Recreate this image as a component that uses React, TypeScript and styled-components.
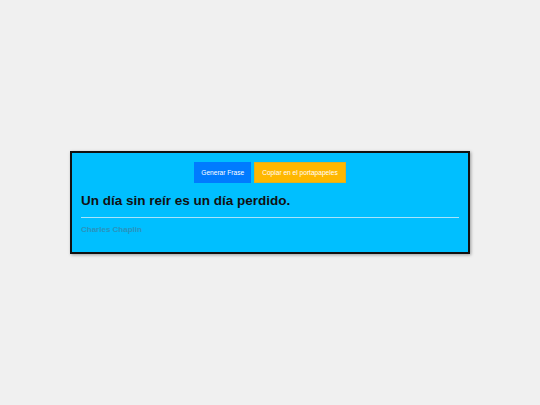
import styled, { createGlobalStyle } from "styled-components";

const GlobalStyle = createGlobalStyle`
    * { box-sizing: border-box; }
    body {
        margin: 0;
        background: #f0f0f0;
        font-family: "Liberation Sans", Arial, sans-serif;
    }
`;

const Page = styled.div`
    min-height: 100vh;
    display: flex;
    align-items: center;
    justify-content: center;
`;

const Card = styled.div`
    width: 400px;
    background: #00bfff;
    border: 2px solid #111;
    box-shadow: 1px 1px 3px rgba(0, 0, 0, 0.35);
    padding: 9px 9px 17px;
`;

const Buttons = styled.div`
    display: flex;
    justify-content: center;
    gap: 3px;
`;

interface IButton {
    variant: "primary" | "warning";
}

const Button = styled.button<IButton>`
    font-family: inherit;
    font-size: 6.6px;
    height: 21px;
    padding: 0 ${props => (props.variant === "primary" ? "6px" : "7px")};
    color: #fff;
    border: 1px solid ${props => (props.variant === "primary" ? "#007bff" : "#e0b020")};
    background: ${props => (props.variant === "primary" ? "#007bff" : "#ffb700")};
    cursor: pointer;
`;

const Quote = styled.h1`
    margin: 10px 0 0;
    font-size: 13.5px;
    font-weight: bold;
    color: #111;
    line-height: 16px;
`;

const Divider = styled.hr`
    margin: 8px 0 0;
    border: 0;
    border-top: 1px solid #a8e4fb;
`;

const Author = styled.p`
    margin: 7px 0 0;
    font-size: 8px;
    line-height: 10px;
    font-weight: bold;
    color: #2a93bd;
`;

export default function App() {
    return (
        <>
            <GlobalStyle />
            <Page>
                <Card>
                    <Buttons>
                        <Button variant="primary">Generar Frase</Button>
                        <Button variant="warning">Copiar en el portapapeles</Button>
                    </Buttons>
                    <Quote>Un día sin reír es un día perdido.</Quote>
                    <Divider />
                    <Author>Charles Chaplin</Author>
                </Card>
            </Page>
        </>
    );
}
